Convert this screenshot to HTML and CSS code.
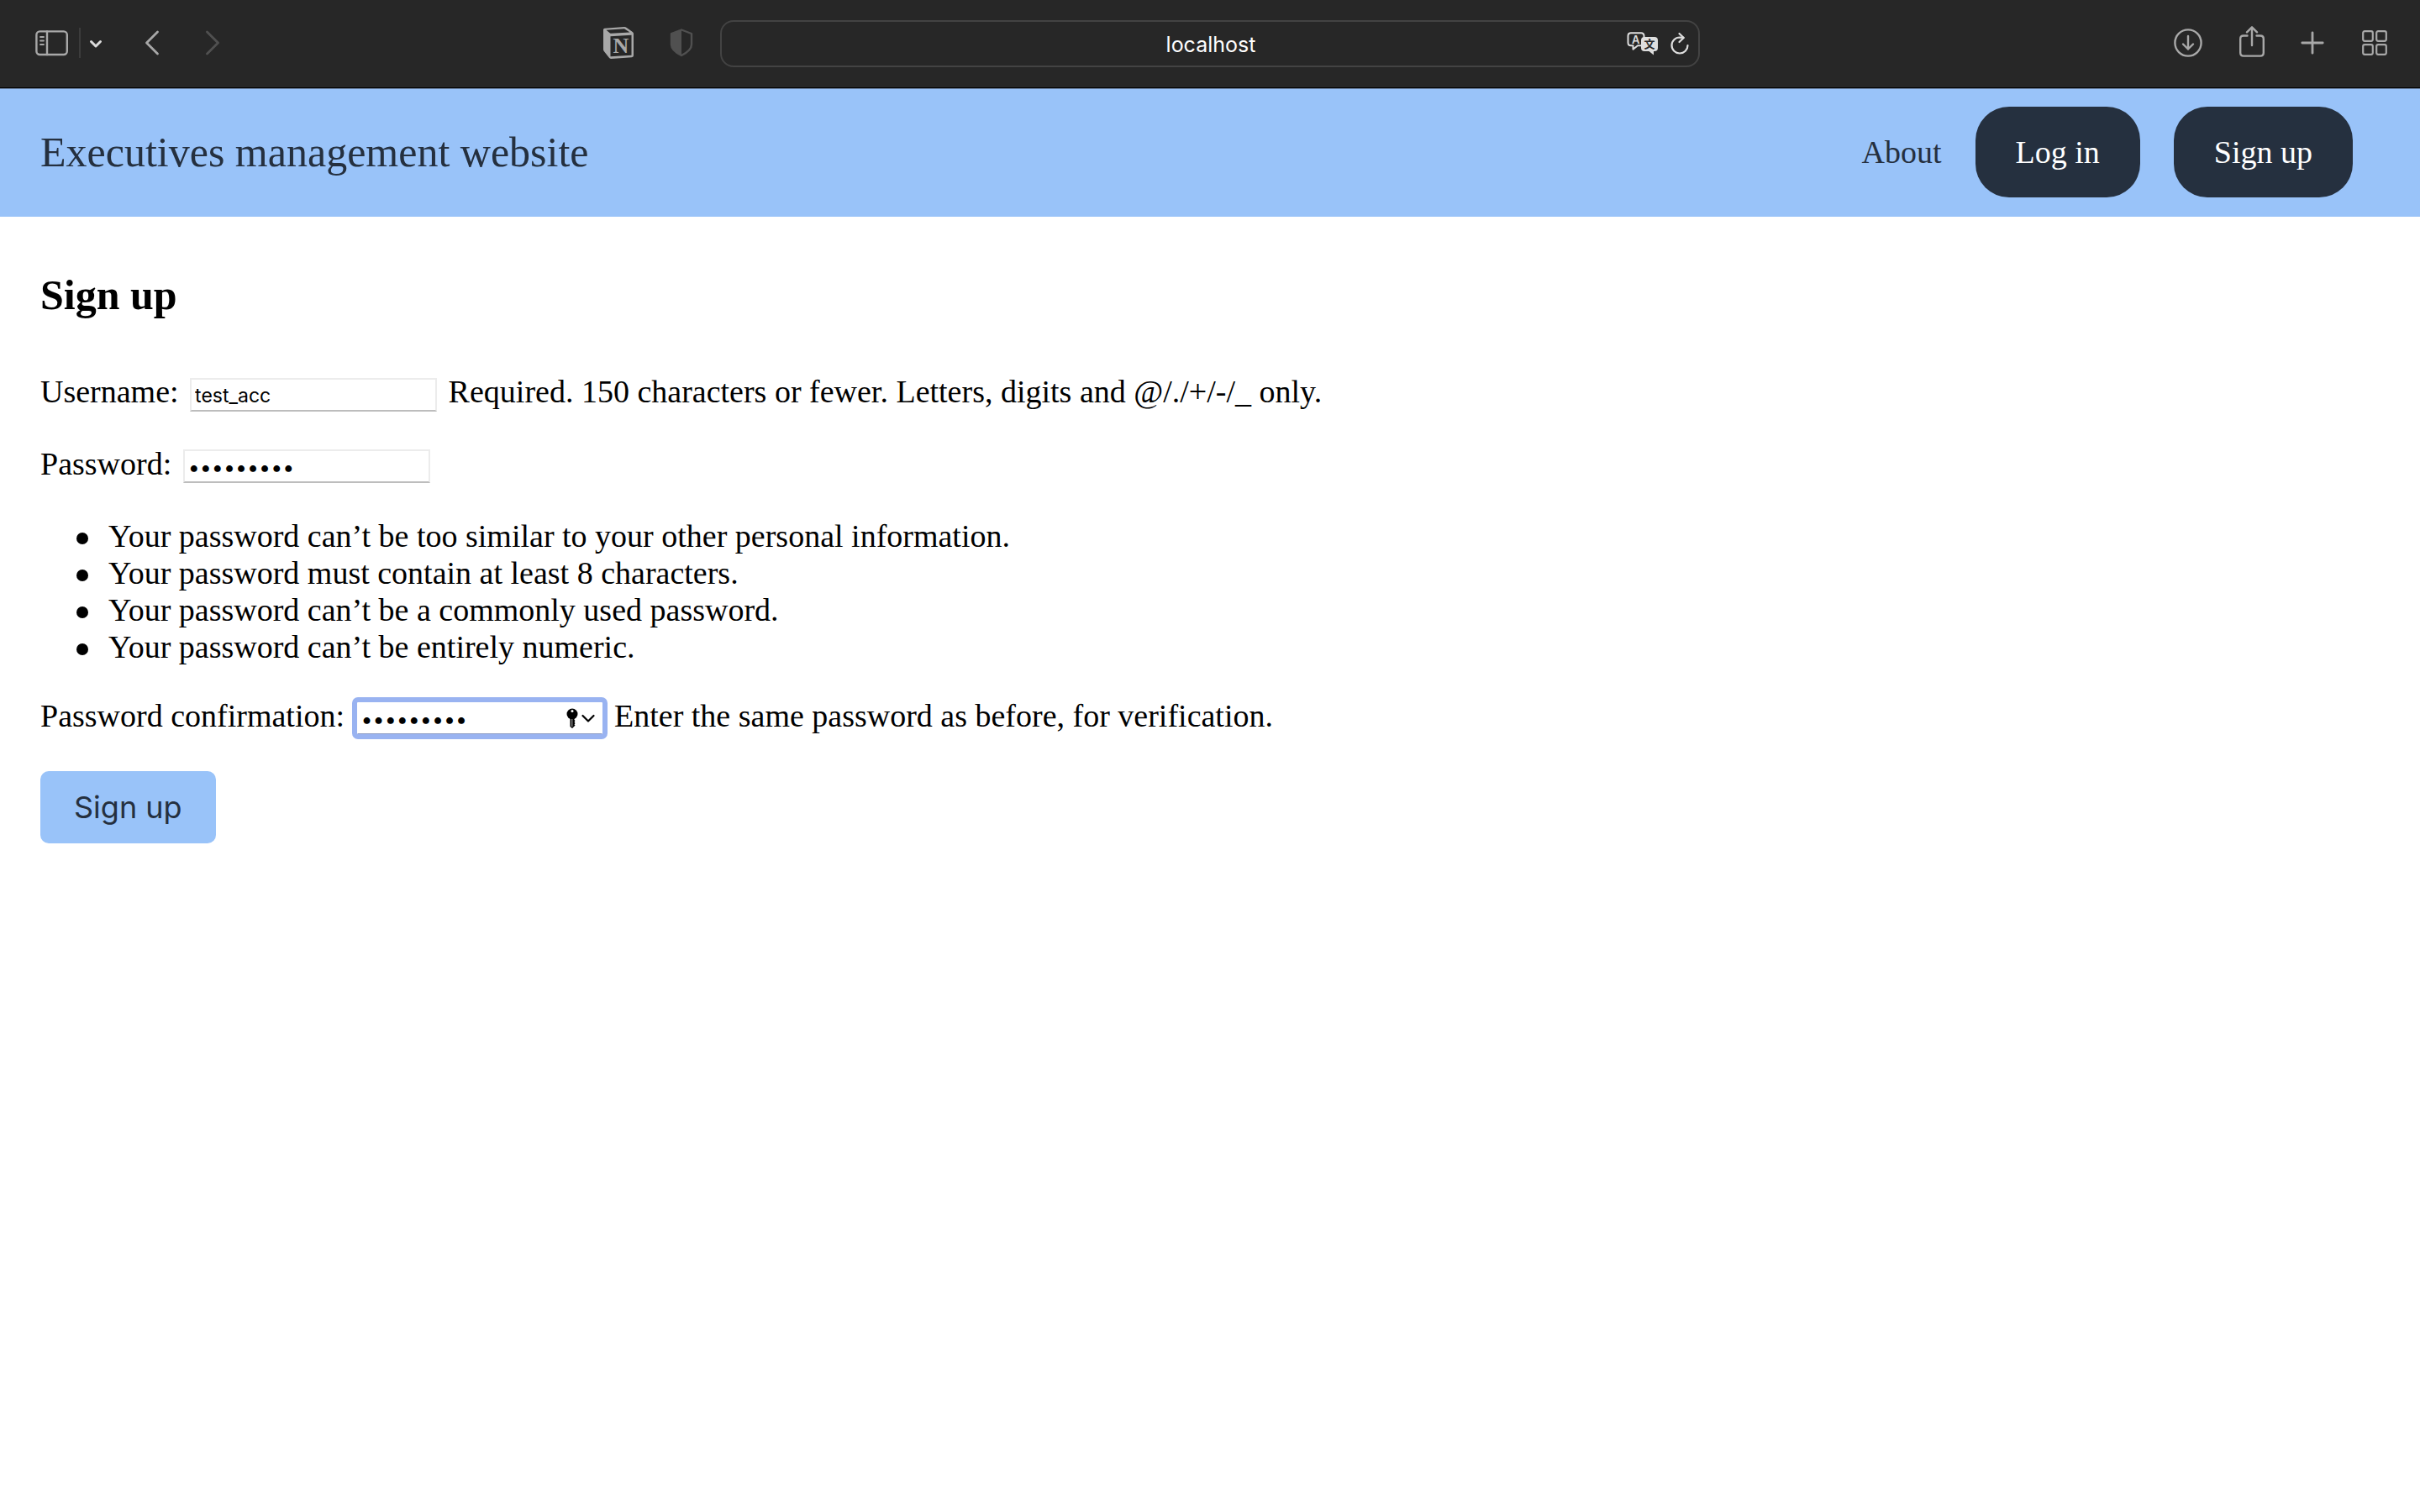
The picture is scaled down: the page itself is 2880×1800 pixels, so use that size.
FILE: index.html
```html
<!DOCTYPE html>
<html lang="en">
<head>
<meta charset="utf-8">
<title>Executives management website</title>
<link rel="stylesheet" href="styles.css">
</head>
<body>
<div class="toolbar" role="toolbar" aria-label="Browser">
  <div class="tools tools-start">
    <button class="tool" type="button" aria-label="Show sidebar">
      <svg width="40" height="32" viewBox="0 0 40 32" fill="none" stroke="#a8a8a8" stroke-width="2.4" stroke-linecap="round"><rect x="1.4" y="2.4" width="36.4" height="27.6" rx="4"/><path d="M14 2.4v27.6"/><path d="M6 9h4M6 13.500h4M6 18h4" stroke-width="1.8"/></svg>
    </button>
    <span class="divider"></span>
    <button class="tool" type="button" aria-label="Tab groups">
      <svg width="16" height="32" viewBox="0 0 16 32" fill="none" stroke="#dcdcdc" stroke-width="3" stroke-linecap="round" stroke-linejoin="round"><path d="M2.500 14.500l5.500 5.500 5.500-5.500"/></svg>
    </button>
    <button class="tool tool-back" type="button" aria-label="Back">
      <svg width="18" height="32" viewBox="0 0 18 32" fill="none" stroke="#a8a8a8" stroke-width="2.800" stroke-linecap="round" stroke-linejoin="round"><path d="M15.500 3L2.500 16l13 13"/></svg>
    </button>
    <button class="tool tool-forward" type="button" aria-label="Forward">
      <svg width="18" height="32" viewBox="0 0 18 32" fill="none" stroke="#505050" stroke-width="2.800" stroke-linecap="round" stroke-linejoin="round"><path d="M2.500 3l13 13-13 13"/></svg>
    </button>
    <button class="tool tool-notion" type="button" aria-label="Notion">
      <svg width="38" height="40" viewBox="0 0 38 40"><path d="M1 4.500Q1 3 2.500 2.800L26 1q1.500 0 2.800 1l7 5Q37 7.800 37 9v26q0 2-2 2.200L10.500 39q-1.500 0-2.400-1L1.800 30Q1 29 1 28z" fill="#a8a8a8"/><path d="M4.500 4.800L26 3.200l6.500 4.300-22 1.300q-1 0-1.800-.6z" fill="#272727"/><path d="M9.500 12.200l25-1.500v24l-25 1.600z" fill="#272727"/><text x="22" y="32" text-anchor="middle" class="glyph glyph-n">N</text></svg>
    </button>
    <button class="tool tool-shield" type="button" aria-label="Privacy report">
      <svg width="28" height="34" viewBox="0 0 28 34"><path d="M14 1.500L26 6v13c0 5-5 9.500-12 13C7 28.500 2 24 2 19V6z" fill="none" stroke="#505050" stroke-width="2.400" stroke-linejoin="round"/><path d="M14 1.500v30.500C7 28.500 2 24 2 19V6z" fill="#505050"/></svg>
    </button>
  </div>
  <div class="address">
    <input class="address-input" type="text" value="localhost" aria-label="Address">
    <div class="address-actions">
      <button class="tool" type="button" aria-label="Translate">
        <svg width="38" height="28" viewBox="0 0 38 28"><path d="M5 1.200h12q3.500 0 3.500 3.500v8q0 3.500-3.500 3.500h-4l-5.500 4.500v-4.500H5q-3.500 0-3.500-3.500v-8Q1.500 1.200 5 1.200z" fill="none" stroke="#dedede" stroke-width="2" stroke-linejoin="round"/><text x="10.800" y="13.500" text-anchor="middle" class="glyph glyph-a">A</text><path d="M21 6h12q4 0 4 4v9q0 4-4 4h-1v4.500L26.500 23H21q-4 0-4-4v-9q0-4 4-4z" fill="#dedede"/><text x="27" y="19" text-anchor="middle" class="glyph glyph-wen">文</text></svg>
      </button>
      <button class="tool" type="button" aria-label="Reload">
        <svg width="22" height="28" viewBox="0 0 22 28" fill="none" stroke="#dedede" stroke-width="2.200" stroke-linecap="round" stroke-linejoin="round"><path d="M20.500 16A9.500 9.500 0 1 1 11 6.500l4.500.3"/><path d="M10.500 2l5.200 5-5.200 5"/></svg>
      </button>
    </div>
  </div>
  <div class="tools tools-end">
    <button class="tool" type="button" aria-label="Downloads">
      <svg width="36" height="40" viewBox="0 0 36 40" fill="none" stroke="#a8a8a8" stroke-width="2.400" stroke-linecap="round" stroke-linejoin="round"><circle cx="18" cy="20" r="15.600"/><path d="M18 12v15.500M12 21.500l6 6 6-6"/></svg>
    </button>
    <button class="tool" type="button" aria-label="Share">
      <svg width="32" height="40" viewBox="0 0 32 40" fill="none" stroke="#a8a8a8" stroke-width="2.400" stroke-linecap="round" stroke-linejoin="round"><path d="M10.500 11.500H6q-3.800 0-3.800 3.800v16.500q0 3.800 3.800 3.800h20q3.800 0 3.800-3.800V15.300q0-3.800-3.800-3.800h-4.500"/><path d="M16 23V1.500M10 7.300l6-6 6 6"/></svg>
    </button>
    <button class="tool" type="button" aria-label="New tab">
      <svg width="28" height="28" viewBox="0 0 28 28" stroke="#a8a8a8" stroke-width="2.800" stroke-linecap="round"><path d="M14 1.800v24.400M1.800 14h24.400"/></svg>
    </button>
    <button class="tool" type="button" aria-label="Tab overview">
      <svg width="34" height="32" viewBox="0 0 34 32" fill="none" stroke="#a8a8a8" stroke-width="2.200"><rect x="4.200" y="2.200" width="11.600" height="11.600" rx="2"/><rect x="20.200" y="2.200" width="11.600" height="11.600" rx="2"/><rect x="4.200" y="18.200" width="11.600" height="11.600" rx="2"/><rect x="20.200" y="18.200" width="11.600" height="11.600" rx="2"/></svg>
    </button>
  </div>
</div>

<header class="site-header">
  <a class="brand" href="#">Executives management website</a>
  <nav class="site-nav">
    <a class="nav-link" href="#">About</a>
    <a class="nav-button" href="#">Log in</a>
    <a class="nav-button" href="#">Sign up</a>
  </nav>
</header>

<main class="content">
  <h1 class="heading">Sign up</h1>
  <form>
    <p class="row">
      <label for="username">Username:</label>
      <input class="field" id="username" type="text" value="test_acc">
      <span>Required. 150 characters or fewer. Letters, digits and @/./+/-/_ only.</span>
    </p>
    <p class="row">
      <label for="password1">Password:</label>
      <input class="field field-secret" id="password1" type="password" value="testpass1">
    </p>
    <ul class="rules">
      <li>Your password can’t be too similar to your other personal information.</li>
      <li>Your password must contain at least 8 characters.</li>
      <li>Your password can’t be a commonly used password.</li>
      <li>Your password can’t be entirely numeric.</li>
    </ul>
    <p class="row">
      <label for="password2">Password confirmation:</label>
      <span class="field-wrap"><input class="field field-secret field-active" id="password2" type="password" value="testpass1"><svg class="key" width="34" height="24" viewBox="0 0 34 24"><circle cx="7" cy="7" r="6.500"/><path d="M4.500 12h5v2l1 1-1 1.500 1 1.500-1 1.500 1 1-3.500 3.500-2.500-2z"/><circle cx="7" cy="3.500" r="1.500" fill="#fff"/><path d="M6.800 13v9" stroke="#bbb"/><path d="M19.500 9l6.500 6.500L32.500 9" fill="none" stroke="#000" stroke-width="2.200" stroke-linecap="round" stroke-linejoin="round"/></svg></span>
      <span>Enter the same password as before, for verification.</span>
    </p>
    <button class="submit" type="submit">Sign up</button>
  </form>
</main>
</body>
</html>
```
FILE: styles.css
```css
* {
  box-sizing: border-box;
}

body {
  margin: 0;
  background: #fff;
  color: #000;
  font-family: "Liberation Serif", "Times New Roman", serif;
  font-size: 38px;
  line-height: 44px;
}

a {
  color: inherit;
  text-decoration: none;
}

/* Browser toolbar */
.toolbar {
  display: grid;
  grid-template-columns: 1fr 40.5% 1fr;
  align-items: center;
  padding: 24px 0;
  background: #272727;
  border-bottom: 1px solid #000;
}

.tools {
  display: flex;
  align-items: center;
  padding-bottom: 2px;
}

.tools-start {
  padding-left: 42px;
  padding-right: 32px;
}

.tools-end {
  justify-content: flex-end;
  gap: 42px;
  padding-right: 38px;
}

.tool {
  display: flex;
  padding: 0;
  border: 0;
  background: none;
}

.divider {
  width: 2px;
  height: 36px;
  margin: 0 10px 0 12px;
  background: #3c3c3c;
}

.tool-back {
  margin-left: 50px;
}

.tool-forward {
  margin-left: 54px;
}

.tool-notion {
  margin-left: auto;
}

.tool-shield {
  margin-left: 42px;
}

.glyph {
  fill: #dedede;
  font-family: "Inter", "Noto Sans CJK SC", sans-serif;
  font-weight: 600;
}

.glyph-n {
  fill: #a8a8a8;
  font-family: "Liberation Serif", serif;
  font-size: 26px;
  font-weight: 700;
}

.glyph-a {
  font-size: 13px;
}

.glyph-wen {
  fill: #272727;
  font-family: "Noto Sans CJK SC", sans-serif;
  font-size: 13px;
  font-weight: 700;
}

.address {
  display: grid;
  align-items: center;
  height: 56px;
}

.address > * {
  grid-area: 1 / 1;
}

.address-input {
  width: 100%;
  height: 56px;
  padding: 2px 0 0 2px;
  border: 2px solid #434343;
  border-radius: 16px;
  background: transparent;
  color: #fff;
  font: 25px/32px "Inter", sans-serif;
  text-align: center;
}

.address-actions {
  display: flex;
  gap: 14px;
  justify-self: end;
  padding-right: 13px;
}

/* Site header */
.site-header {
  display: flex;
  align-items: center;
  justify-content: space-between;
  padding: 21px 80px 23px 48px;
  border-top: 1px solid #6b83a3;
  background: #99c3f9;
  color: #25303f;
}

.brand {
  font-size: 50px;
  line-height: 58px;
}

.site-nav {
  display: flex;
  align-items: center;
  gap: 40px;
}

.nav-button {
  padding: 32px 48px;
  border-radius: 40px;
  background: #25303f;
  color: #fff;
}

/* Form */
.content {
  padding: 64px 48px;
}

.heading {
  margin: 0 0 64px;
  font-size: 50px;
  line-height: 58px;
}

.row {
  min-height: 48px;
  margin: 0 0 38px;
}

.field {
  width: 294px;
  height: 40px;
  margin: 0 4px;
  padding: 2px 4px 0;
  border: 2px solid #ececec;
  border-bottom-color: #bdbdbd;
  border-radius: 0;
  background: #fff;
  color: #000;
  font: 23px/30px "Inter", sans-serif;
  vertical-align: baseline;
}

.field-secret {
  font-size: 25px;
}

.field-wrap {
  position: relative;
}

.field-active {
  border-color: #fff;
  border-bottom-color: #8c9cc4;
  border-radius: 2px;
  outline: 6px solid #99b3f1;
  outline-offset: -1px;
}

.key {
  position: absolute;
  right: 14px;
  top: 12px;
}

.rules {
  margin: 0 0 38px;
  padding: 0 0 0 43px;
  list-style: none;
}

.rules li {
  display: flex;
  align-items: center;
  gap: 24px;
}

.rules li::before {
  content: "";
  width: 14px;
  height: 14px;
  margin-top: 6px;
  border-radius: 50%;
  background: #000;
}

.submit {
  display: block;
  margin-top: 40px;
  padding: 21px 40px;
  border: 0;
  border-radius: 10px;
  background: #99c3f9;
  color: #25303f;
  font: 36px/44px "Inter", sans-serif;
}
```
